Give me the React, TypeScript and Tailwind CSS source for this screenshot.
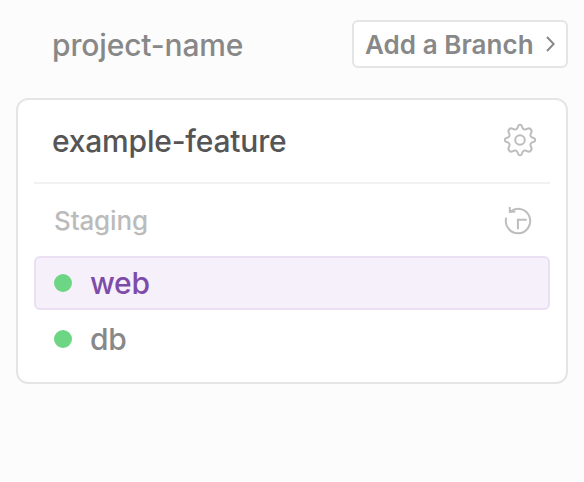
function ChevronIcon() {
  return (
    <svg width="9" height="16" viewBox="0 0 9 16" fill="none" stroke="currentColor" strokeWidth="2">
      <path d="M1 1l6.7 7L1 15" />
    </svg>
  );
}

function GearIcon() {
  return (
    <svg className="mb-[2px]" width="34" height="34" viewBox="-17 -17 34 34" fill="none" stroke="#bdbdbd" strokeWidth="2" strokeLinejoin="round">
      <circle r="4.8" />
      <path d="M-1.8-14C-1.3-15.6 1.3-15.6 1.8-14C2.6-10.3 4.5-9.6 7.6-11.3C9.8-12.5 12.5-9.8 11.3-7.6C9.6-4.5 10.3-2.6 14-1.8C15.6-1.3 15.6 1.3 14 1.8C10.3 2.6 9.6 4.5 11.3 7.6C12.5 9.8 9.8 12.5 7.6 11.3C4.5 9.6 2.6 10.3 1.8 14C1.3 15.6-1.3 15.6-1.8 14C-2.6 10.3-4.5 9.6-7.6 11.3C-9.8 12.5-12.5 9.8-11.3 7.6C-9.6 4.5-10.3 2.6-14 1.8C-15.6 1.3-15.6-1.3-14-1.8C-10.3-2.6-9.6-4.5-11.3-7.6C-12.5-9.8-9.8-12.5-7.6-11.3C-4.5-9.6-2.6-10.3-1.8-14Z" />
    </svg>
  );
}

function HistoryIcon() {
  return (
    <svg width="30" height="30" viewBox="0 0 30 30" fill="none" stroke="#bdbdbd" strokeWidth="2">
      <path d="M3.3 12.6A12.2 12.2 0 1 0 7.8 6.2" />
      <path d="M6.8 2v5l5.6-.6M14.9 24.3V14.8h8.9" />
    </svg>
  );
}

function Service({ name, active = false }: { name: string; active?: boolean }) {
  return (
    <li
      className={
        active
          ? "flex h-[54px] items-center gap-[18px] rounded-md border-2 border-[#eadff3] bg-[#f6f0fb] px-[18px] text-[#7d4ba8]"
          : "flex h-[54px] items-center gap-[18px] border-2 border-transparent px-[18px] text-[#888888]"
      }
    >
      <span className="size-[18px] rounded-full bg-[#6dd684]" />
      <span className="pb-px text-[30px] leading-9 tracking-[-0.3px]">{name}</span>
    </li>
  );
}

export default function App() {
  return (
    <main className="h-[482px] w-[584px] bg-[#fcfcfc] px-4 pt-5 font-['Inter',sans-serif] font-[450]">
      <header className="flex h-12 items-center justify-between pl-9">
        <h1 className="pt-px text-[30px] leading-9 tracking-[-0.15px] text-[#888888]">project-name</h1>
        <button className="flex h-12 w-[216px] items-center justify-between rounded-md border-2 border-[#e5e5e5] bg-white pr-[11px] pl-[11px] text-[26px] font-semibold text-[#888888]">
          <span className="pt-[2px] leading-8 tracking-[0.05px]">Add a Branch</span>
          <ChevronIcon />
        </button>
      </header>
      <section className="mt-[30px] h-[286px] rounded-xl border-2 border-[#e5e5e5] bg-white px-4">
        <div className="flex h-[84px] items-center justify-between border-b-2 border-[#f1f1f1] pr-[13px] pl-[18px]">
          <h2 className="text-[30px] leading-9 tracking-[-0.2px] text-[#555555]">example-feature</h2>
          <GearIcon />
        </div>
        <div className="flex h-[72px] items-center justify-between pr-[17px] pl-5">
          <h3 className="pt-[2px] text-[26px] leading-8 font-medium tracking-[-0.15px] text-[#bbbbbb]">Staging</h3>
          <HistoryIcon />
        </div>
        <ul className="flex flex-col gap-[2px]">
          <Service name="web" active />
          <Service name="db" />
        </ul>
      </section>
    </main>
  );
}
